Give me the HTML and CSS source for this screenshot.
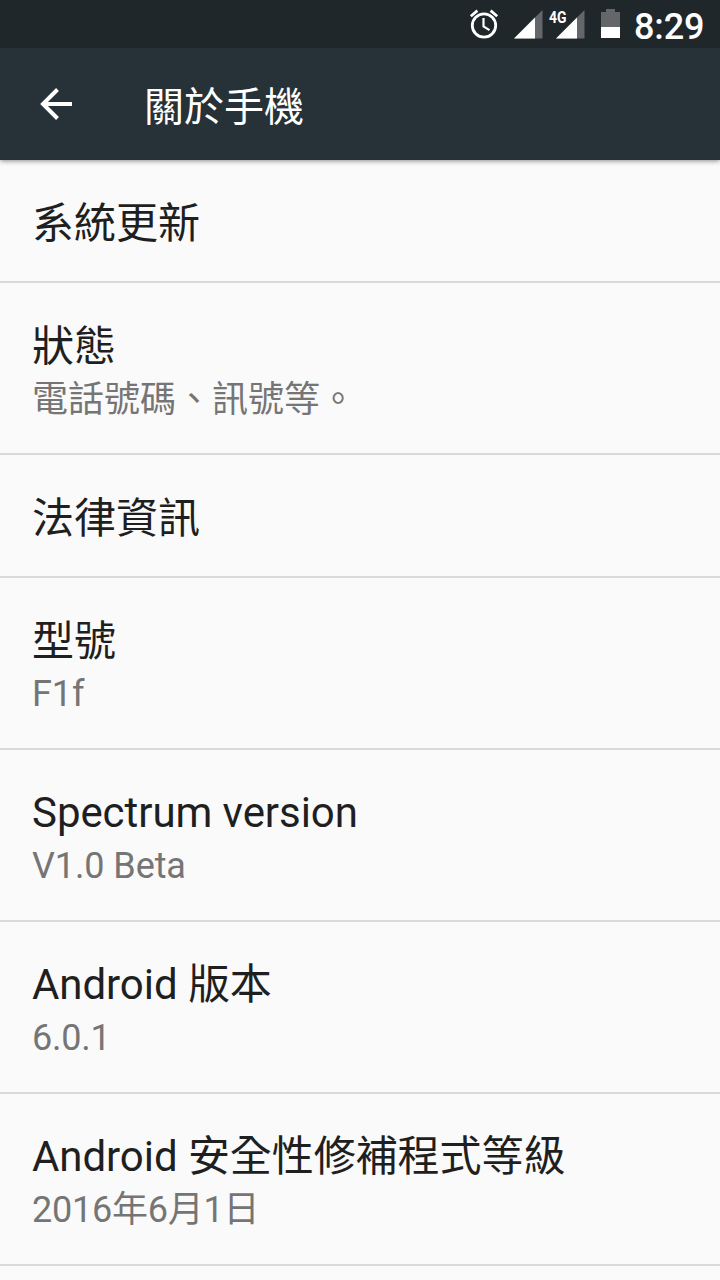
FILE: index.html
```html
<!DOCTYPE html>
<html lang="zh-Hant">
<head>
<meta charset="utf-8">
<title>關於手機</title>
<link rel="stylesheet" href="styles.css">
</head>
<body>
<div class="status">
  <svg class="status-icons" width="170" height="48" viewBox="460 0 170 48">
    <g fill="none" stroke="#fff" stroke-width="2.8">
      <circle cx="484" cy="25.500" r="11.700"/>
      <path d="M483.500 18v8.500l6 3.600" stroke-width="2.2"/>
      <path d="M470.800 16.200l6.600-5.600M497.200 16.200l-6.600-5.600"/>
    </g>
    <path d="M514 38.500l28.500-28.500v28.500z" fill="#636769"/>
    <path d="M514 38.500l21-21v21z" fill="#fff"/>
    <path d="M556 38.500l28.500-28.500v28.500z" fill="#636769"/>
    <path d="M556 38.500l21-21v21z" fill="#fff"/>
    <path d="M601 12h5v-3h9v3h5v16h-19z" fill="#636769"/>
    <path d="M601 27h19v11h-19z" fill="#fff"/>
    <text class="network" x="549" y="22.800" textLength="17.500" lengthAdjust="spacingAndGlyphs">4G</text>
  </svg>
  <span class="clock">8:29</span>
</div>
<header class="bar">
  <svg class="back" width="32" height="32" viewBox="0 0 32 32"><path d="M32 16H3M17.500 1.500L3 16l14.500 14.500" fill="none" stroke="#fff" stroke-width="4"/></svg>
  <h1 class="heading">關於手機</h1>
</header>
<main class="list">
  <section class="row single cjk"><div class="title">系統更新</div></section>
  <section class="row cjk"><div class="title">狀態</div><div class="summary">電話號碼、訊號等。</div></section>
  <section class="row single cjk"><div class="title">法律資訊</div></section>
  <section class="row cjk"><div class="title short">型號</div><div class="summary latin">F1f</div></section>
  <section class="row"><div class="title latin">Spectrum version</div><div class="summary latin">V1.0 Beta</div></section>
  <section class="row"><div class="title latin">Android 版本</div><div class="summary tight">6.0.1</div></section>
  <section class="row"><div class="title latin">Android 安全性修補程式等級</div><div class="summary tight">2016年6月1日</div></section>
</main>
</body>
</html>
```
FILE: styles.css
```css
* { box-sizing: border-box; }
body { margin: 0; height: 1280px; overflow: hidden; background: #fafafa; color: #1f1f1f; font-family: Roboto, "Noto Sans CJK TC", sans-serif; }
.status { height: 48px; background: #1f272a; display: flex; justify-content: flex-end; padding-right: 16px; color: #fff; position: relative; z-index: 1; }
.status-icons { display: block; margin-right: 4px; }
.network { font: 700 17px Roboto, sans-serif; fill: #fff; }
.clock { width: 70px; font-size: 36px; font-weight: 500; line-height: 54px; letter-spacing: -0.15px; white-space: nowrap; }
.bar { height: 112px; background: #263238; display: flex; align-items: center; padding-left: 40px; gap: 72px; color: #fff; box-shadow: 0 1px 5px rgba(0,0,0,.45); position: relative; }
.back { display: block; }
.heading { margin: 0; padding-top: 7px; font-size: 40px; font-weight: 400; line-height: 56px; }
.row { height: 172px; padding: 33px 32px 0; border-bottom: 2px solid #dadada; white-space: nowrap; }
.row.cjk { padding-top: 34px; }
.single { height: 123px; }
.title { font-size: 42px; line-height: 60px; }
.title.short { margin-bottom: -1px; }
.summary { font-size: 36px; line-height: 46px; color: #757575; }
.latin { letter-spacing: -0.1px; }
.title.latin { letter-spacing: -0.06px; }
.tight { letter-spacing: -0.25px; }
```
